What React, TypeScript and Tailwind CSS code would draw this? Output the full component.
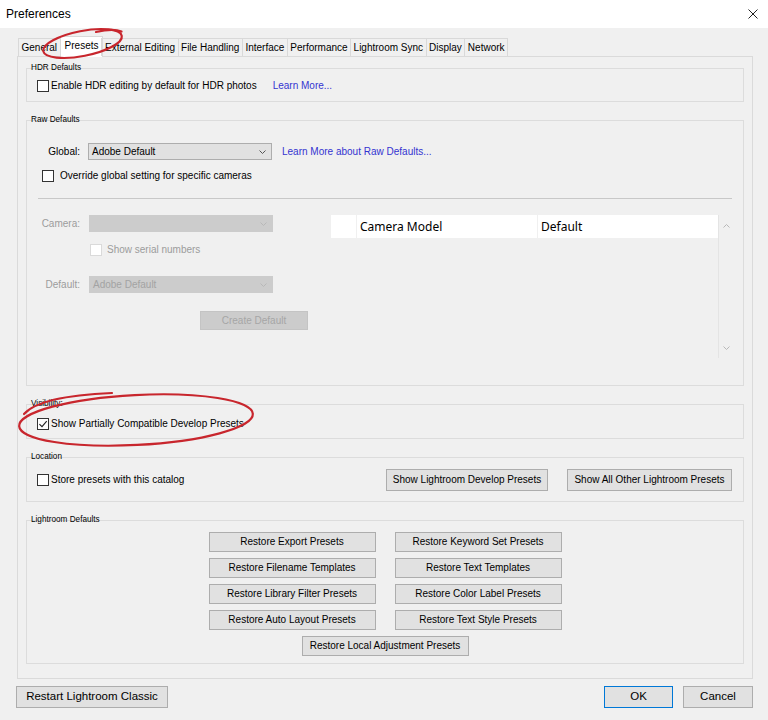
import React from 'react'

const tabs = ['General', 'Presets', 'External Editing', 'File Handling', 'Interface', 'Performance', 'Lightroom Sync', 'Display', 'Network']

const restoreButtons = [
  'Restore Export Presets',
  'Restore Keyword Set Presets',
  'Restore Filename Templates',
  'Restore Text Templates',
  'Restore Library Filter Presets',
  'Restore Color Label Presets',
  'Restore Auto Layout Presets',
  'Restore Text Style Presets',
]

function Check({ checked = false, disabled = false }: { checked?: boolean; disabled?: boolean }) {
  return (
    <span
      className={`flex h-[12px] w-[12px] shrink-0 items-center justify-center border bg-white ${
        disabled ? 'border-[#dadada]' : 'border-[#333333]'
      }`}
    >
      {checked && (
        <svg width="10" height="10" viewBox="0 0 10 10">
          <path d="M1.4 5.1 L4 7.7 L8.7 2.2" fill="none" stroke="#222" strokeWidth="1.1" />
        </svg>
      )}
    </span>
  )
}

function Chevron({ color, up = false }: { color: string; up?: boolean }) {
  return (
    <svg width="7" height="4" viewBox="0 0 7 4">
      <path d={up ? 'M0.5 3.5 L3.5 0.5 L6.5 3.5' : 'M0.5 0.5 L3.5 3.5 L6.5 0.5'} fill="none" stroke={color} strokeWidth="1" />
    </svg>
  )
}

function Select({ value, disabled = false, className = '' }: { value: string; disabled?: boolean; className?: string }) {
  return (
    <div
      className={`flex h-[17px] w-[184px] items-center justify-between border pl-[3px] pr-[5px] text-[10px] ${
        disabled ? 'border-[#cccccc] bg-[#cccccc] text-[#a3a3a3]' : 'border-[#adadad] bg-[#e1e1e1] text-black'
      } ${className}`}
    >
      <span>{value}</span>
      <Chevron color={disabled ? '#b8b8b8' : '#555'} />
    </div>
  )
}

function Btn({ children, className = '', disabled = false }: { children: React.ReactNode; className?: string; disabled?: boolean }) {
  return (
    <button
      type="button"
      className={`flex items-center justify-center border ${
        disabled ? 'border-[#c4c4c4] bg-[#cccccc] text-[#a6a6a6]' : 'border-[#adadad] bg-[#e1e1e1] text-black'
      } ${className}`}
    >
      {children}
    </button>
  )
}

function Group({ label, className = '', children }: { label: string; className?: string; children: React.ReactNode }) {
  return (
    <div>
      <div className="relative z-10 h-[13px] pl-[5px] text-[8.2px] leading-[13px] text-black">{label}</div>
      <div className={`-mt-[6px] border border-[#dcdcdc] ${className}`}>{children}</div>
    </div>
  )
}

export default function App() {
  return (
    <div className="relative h-[720px] w-[768px] overflow-hidden bg-[#f0f0f0] font-['Liberation_Sans',Arial,sans-serif] text-black">
      {/* title bar */}
      <div className="flex h-[28px] items-center justify-between bg-white pl-[6px] pr-[10px]">
        <span className="text-[12px]">Preferences</span>
        <svg width="10" height="10" viewBox="0 0 10 10">
          <path d="M0.5 0.5 L9.5 9.5 M9.5 0.5 L0.5 9.5" stroke="#222" strokeWidth="1" />
        </svg>
      </div>

      <div className="pl-[17px] pr-[15px] pt-[8px]">
        {/* tab strip */}
        <div className="relative z-10 ml-[1px] flex h-[20px] items-end">
          {tabs.map((t, i) =>
            t === 'Presets' ? (
              <div
                key={t}
                className="-mx-[1px] -mb-px flex h-[21px] items-center border border-b-0 border-[#d9d9d9] bg-white px-[4px] pb-[3px] text-[10px]"
              >
                {t}
              </div>
            ) : (
              <div
                key={t}
                className={`flex h-[18px] items-center border border-b-0 border-[#d9d9d9] px-[2.5px] text-[10px] ${i > 0 ? '-ml-px' : ''}`}
              >
                {t}
              </div>
            )
          )}
        </div>

        {/* tab panel */}
        <div className="flex flex-col gap-[11px] border border-[#dadada] px-[8px] pb-[14px] pt-[4px] text-[10px] leading-[12px]">
          <Group label="HDR Defaults" className="flex h-[34px] items-center pl-[10px] pt-[2px]">
            <div className="flex items-center gap-[2px]">
              <Check />
              <span>Enable HDR editing by default for HDR photos</span>
            </div>
            <span className="ml-[16px] text-[#3434d0]">Learn More...</span>
          </Group>

          <Group label="Raw Defaults" className="h-[266px] pt-[22px]">
            <div className="flex h-[17px] items-center">
              <span className="w-[53px] text-right">Global:</span>
              <Select value="Adobe Default" className="ml-[8px]" />
              <span className="ml-[10px] text-[#3434d0]">Learn More about Raw Defaults...</span>
            </div>
            <div className="ml-[15px] mt-[10px] flex items-center gap-[6px]">
              <Check />
              <span>Override global setting for specific cameras</span>
            </div>
            <div className="mx-[11px] mt-[16px] h-px bg-[#c8c8c8]" />

            <div className="mt-[16px] flex pr-[9px]">
              <div className="w-[304px] text-[#9c9c9c]">
                <div className="flex h-[17px] items-center">
                  <span className="w-[53px] text-right">Camera:</span>
                  <Select value="" disabled className="ml-[9px]" />
                </div>
                <div className="ml-[63px] mt-[12px] flex items-center gap-[5px]">
                  <Check disabled />
                  <span>Show serial numbers</span>
                </div>
                <div className="mt-[20px] flex h-[17px] items-center">
                  <span className="w-[53px] text-right">Default:</span>
                  <Select value="Adobe Default" disabled className="ml-[9px]" />
                </div>
                <Btn disabled className="ml-[173px] mt-[18px] h-[19px] w-[108px] text-[10px]">
                  Create Default
                </Btn>
              </div>

              {/* camera defaults list */}
              <div className="flex h-[143px] flex-1">
                <div className="flex-1">
                  <div className="flex h-[23px] gap-px font-['Noto_Sans',sans-serif] text-[12px]">
                    <div className="w-[25px] bg-white" />
                    <div className="flex w-[180px] items-center bg-white pl-[3px]">Camera Model</div>
                    <div className="flex flex-1 items-center bg-white pl-[3px]">Default</div>
                  </div>
                </div>
                <div className="flex w-[16px] flex-col items-center justify-between border-l border-[#e4e4e4] pb-[8px] pt-[9px]">
                  <Chevron color="#b8b8b8" up />
                  <Chevron color="#b8b8b8" />
                </div>
              </div>
            </div>
          </Group>

          <Group label="Visibility:" className="flex h-[35px] items-center pl-[10px] pt-[4px]">
            <div className="flex items-center gap-[2px]">
              <Check checked />
              <span>Show Partially Compatible Develop Presets</span>
            </div>
          </Group>

          <Group label="Location" className="flex h-[45px] items-center pl-[10px] pr-[11px]">
            <div className="flex items-center gap-[2px]">
              <Check />
              <span>Store presets with this catalog</span>
            </div>
            <Btn className="ml-auto h-[22px] w-[162px] text-[10px]">Show Lightroom Develop Presets</Btn>
            <Btn className="ml-[19px] h-[22px] w-[165px] text-[10px]">Show All Other Lightroom Presets</Btn>
          </Group>

          <Group label="Lightroom Defaults" className="h-[144px] pt-[11px]">
            <div className="grid grid-cols-[167px_167px] justify-center gap-x-[19px] gap-y-[6px]">
              {restoreButtons.map(b => (
                <Btn key={b} className="h-[20px] text-[10px]">
                  {b}
                </Btn>
              ))}
            </div>
            <div className="mt-[6px] flex justify-center">
              <Btn className="h-[20px] w-[167px] text-[10px]">Restore Local Adjustment Presets</Btn>
            </div>
          </Group>
        </div>
      </div>

      {/* dialog buttons */}
      <div className="mt-[7px] flex pl-[16px] pr-[15px] text-[11.5px]">
        <Btn className="h-[22px] w-[152px]">Restart Lightroom Classic</Btn>
        <Btn className="ml-auto h-[22px] w-[69px] !border-[#0078d7]">OK</Btn>
        <Btn className="ml-[10px] h-[22px] w-[70px]">Cancel</Btn>
      </div>

      {/* red hand-drawn markup circles */}
      <svg className="pointer-events-none absolute left-0 top-0 z-20" width="768" height="720" viewBox="0 0 768 720">
        <g fill="none" stroke="#c8262d" strokeWidth="2.2" strokeLinecap="round">
          <ellipse cx="82.5" cy="43.5" rx="40" ry="12.5" transform="rotate(-11 82.5 43.5)" />
          <path d="M96 32 Q113 28 121.5 31.5" />
          <ellipse cx="136" cy="420" rx="117" ry="25" transform="rotate(-3 136 420)" />
          <path d="M24 414 Q40 396 112 393" />
        </g>
      </svg>
    </div>
  )
}
